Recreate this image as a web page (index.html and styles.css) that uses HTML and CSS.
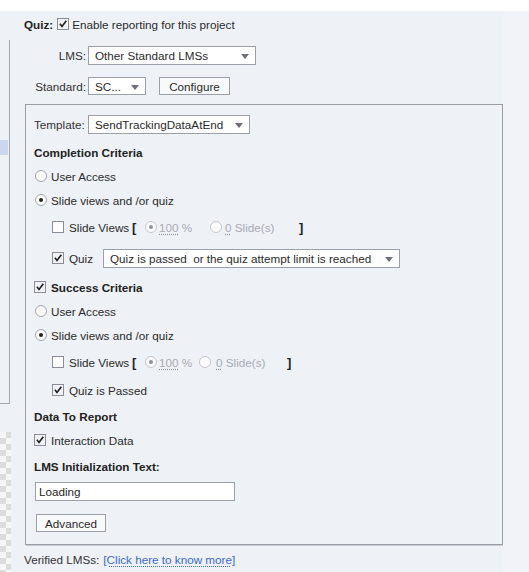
FILE: index.html
```html
<!DOCTYPE html>
<html>
<head>
<meta charset="utf-8">
<link rel="stylesheet" href="styles.css">
</head>
<body>
<div class="strip"></div>
<div class="page">
  <div class="sidebar">
    <div class="side-panel"><div class="side-hl"></div></div>
    <div class="checker"></div>
  </div>
  <div class="main">
    <div class="row r-quiz">
      <span class="bold">Quiz:</span>
      <span class="cb checked"><svg viewBox="0 0 12 12"><path d="M2.3 5.8 L4.8 9 L10 2.2"/></svg></span>
      <span>Enable reporting for this project</span>
    </div>
    <div class="row r-lms">
      <span class="lbl">LMS:</span>
      <div class="select s-lms"><span>Other Standard LMSs</span><i class="arrow"></i></div>
    </div>
    <div class="row r-std">
      <span class="lbl">Standard:</span>
      <div class="select s-std"><span>SC...</span><i class="arrow"></i></div>
      <div class="btn b-conf">Configure</div>
    </div>

    <div class="box">
      <div class="row r-tpl">
        <span class="tpl-lbl">Template:</span>
        <div class="select s-tpl"><span>SendTrackingDataAtEnd</span><i class="arrow"></i></div>
      </div>
      <div class="row bold m4">Completion Criteria</div>
      <div class="row"><span class="rd"></span><span class="t">User Access</span></div>
      <div class="row"><span class="rd on"></span><span class="t">Slide views and /or quiz</span></div>
      <div class="row ind m3">
        <span class="cb"></span><span class="t2 sv">Slide Views</span>
        <span class="br bl1">[</span>
        <span class="rd dis on"></span><span class="dt d1a"><u>100</u> %</span>
        <span class="rd dis"></span><span class="dt d2a"><u>0</u> Slide(s)</span>
        <span class="br">]</span>
      </div>
      <div class="row ind m7">
        <span class="cb checked"><svg viewBox="0 0 12 12"><path d="M2.3 5.8 L4.8 9 L10 2.2"/></svg></span><span class="t2 ql">Quiz</span>
        <div class="select s-quiz"><span>Quiz is passed&nbsp; or the quiz attempt limit is reached</span><i class="arrow"></i></div>
      </div>
      <div class="row m5">
        <span class="cb checked"><svg viewBox="0 0 12 12"><path d="M2.3 5.8 L4.8 9 L10 2.2"/></svg></span><span class="t2 bold">Success Criteria</span>
      </div>
      <div class="row"><span class="rd"></span><span class="t">User Access</span></div>
      <div class="row"><span class="rd on"></span><span class="t">Slide views and /or quiz</span></div>
      <div class="row ind m3">
        <span class="cb"></span><span class="t2 sv">Slide Views</span>
        <span class="br bl2">[</span>
        <span class="rd dis on"></span><span class="dt d1b"><u>100</u> %</span>
        <span class="rd dis"></span><span class="dt d2b"><u>0</u> Slide(s)</span>
        <span class="br">]</span>
      </div>
      <div class="row ind m4">
        <span class="cb checked"><svg viewBox="0 0 12 12"><path d="M2.3 5.8 L4.8 9 L10 2.2"/></svg></span><span class="t2">Quiz is Passed</span>
      </div>
      <div class="row bold m2">Data To Report</div>
      <div class="row">
        <span class="cb checked"><svg viewBox="0 0 12 12"><path d="M2.3 5.8 L4.8 9 L10 2.2"/></svg></span><span class="t2">Interaction Data</span>
      </div>
      <div class="row bold m2">LMS Initialization Text:</div>
      <div class="row m1"><div class="input">Loading</div></div>
      <div class="row m8"><div class="btn b-adv">Advanced</div></div>
    </div>

    <div class="row r-ver">
      <span>Verified LMSs:</span>
      <a class="link">[Click here to know more]</a>
    </div>
  </div>
  <div class="rightpad"></div>
</div>
</body>
</html>
```

FILE: styles.css
```css
* { box-sizing: border-box; }
html, body { margin: 0; padding: 0; }
body {
  width: 529px;
  height: 572px;
  overflow: hidden;
  background: #eef1f6;
  font-family: "Liberation Sans", Arial, sans-serif;
  font-size: 11.7px;
  color: #2b2b2b;
}
.strip { height: 11px; background: #ffffff; }
.page { display: flex; height: 561px; }

.sidebar { width: 14px; display: flex; flex-direction: column; flex: none; }
.side-panel {
  margin-top: 29px;
  width: 10px;
  height: 364px;
  border-right: 1px solid #a6a8b0;
  border-bottom: 1px solid #a6a8b0;
  position: relative;
}
.side-hl {
  position: absolute;
  left: 0; top: 100px;
  width: 8px; height: 15px;
  background: #c9d8ee;
}
.checker {
  margin-top: 28px;
  width: 11px;
  flex: 1;
  background: repeating-conic-gradient(#dcdcdc 0 25%, #f6f6f6 0 50%) 0 0 / 12px 12px;
}

.main { width: 489px; flex: none; padding-left: 10px; }
.rightpad { flex: 1; background: #f1f3f8; }

.row { height: 24px; display: flex; align-items: center; white-space: nowrap; }
.bold { font-weight: bold; color: #222; }
.m1 { margin-top: 1px; } .m2 { margin-top: 2px; } .m3 { margin-top: 3px; }
.m4 { margin-top: 4px; } .m5 { margin-top: 5px; } .m7 { margin-top: 7px; }
.m8 { margin-top: 8px; }

.r-quiz { margin-top: 1px; }
.r-quiz .cb { margin: 0 3px 0 4px; }
.r-lms { margin-top: 7px; }
.r-std { margin-top: 7px; }
.lbl { width: 62px; text-align: right; margin-right: 2px; color: #333; }

.select {
  height: 19px;
  background: #fff;
  border: 1px solid #9c9eaa;
  display: flex;
  align-items: center;
  padding-left: 6px;
  position: relative;
  color: #2b2b2b;
}
.arrow {
  position: absolute;
  right: 6px; top: 7px;
  width: 0; height: 0;
  border-left: 4px solid transparent;
  border-right: 4px solid transparent;
  border-top: 5px solid #6d6f7c;
}
.s-lms { width: 168px; }
.s-std { width: 58px; height: 18px; }
.s-tpl { width: 162px; }
.s-quiz { width: 297px; }

.btn {
  height: 18px;
  border: 1px solid #9c9eaa;
  background: #f8f9fb;
  display: flex;
  align-items: center;
  justify-content: center;
  color: #2b2b2b;
}
.b-conf { width: 71px; margin-left: 13px; }
.b-adv { width: 70px; margin-left: 2px; }

.box {
  margin-top: 6px;
  width: 478px;
  margin-left: 1px;
  border: 1px solid #9c9ca6;
  box-shadow: 1px 1px 0 #c9cbd2;
  padding: 7px 8px 9px 8px;
}
.tpl-lbl { width: 54px; color: #333; }

.cb {
  width: 12px; height: 12px;
  border: 1px solid #8a8c98;
  background: #fff;
  flex: none;
  display: inline-flex;
}
.cb.checked { background: #f1f2f5; }
.cb svg { width: 10px; height: 10px; }
.cb path { fill: none; stroke: #1f1f1f; stroke-width: 2; }

.rd {
  width: 12px; height: 12px;
  border: 1px solid #a3a5b0;
  border-radius: 50%;
  background: #fbfbfc;
  flex: none;
  position: relative;
  margin-left: 1px;
}
.rd.on::after {
  content: "";
  position: absolute;
  left: 3px; top: 3px;
  width: 4px; height: 4px;
  border-radius: 50%;
  background: #222;
}
.rd.dis { border-color: #c4c6ce; margin-left: 0; }
.rd.dis.on::after { background: #8f9099; }
.t { margin-left: 4px; }
.t2 { margin-left: 5px; }
.ind { padding-left: 18px; }
.sv { width: 63px; }
.ql { width: 34px; }

.br { font-weight: bold; color: #222; font-size: 13px; }
.bl1 { width: 13px; }
.bl2 { width: 13px; }
.dt { color: #a9abb3; flex: none; }
.dt u { text-decoration: underline dotted #8a8c98; text-underline-offset: 2px; }
.d1a { width: 53px; padding-left: 2px; }
.d2a { width: 77px; padding-left: 3px; }
.d1b { width: 42px; padding-left: 2px; }
.d2b { width: 76px; padding-left: 5px; }

.input {
  width: 200px; height: 19px;
  margin-left: 1px;
  background: #fff;
  border: 1px solid #9c9eaa;
  padding-left: 3px;
  display: flex; align-items: center;
  color: #1f1f1f;
}

.r-ver { margin-top: 2px; color: #333; }
.link {
  margin-left: 4px;
  color: #3b6ac6;
  text-decoration: underline dotted #3b6ac6;
  text-underline-offset: 2px;
}
```
